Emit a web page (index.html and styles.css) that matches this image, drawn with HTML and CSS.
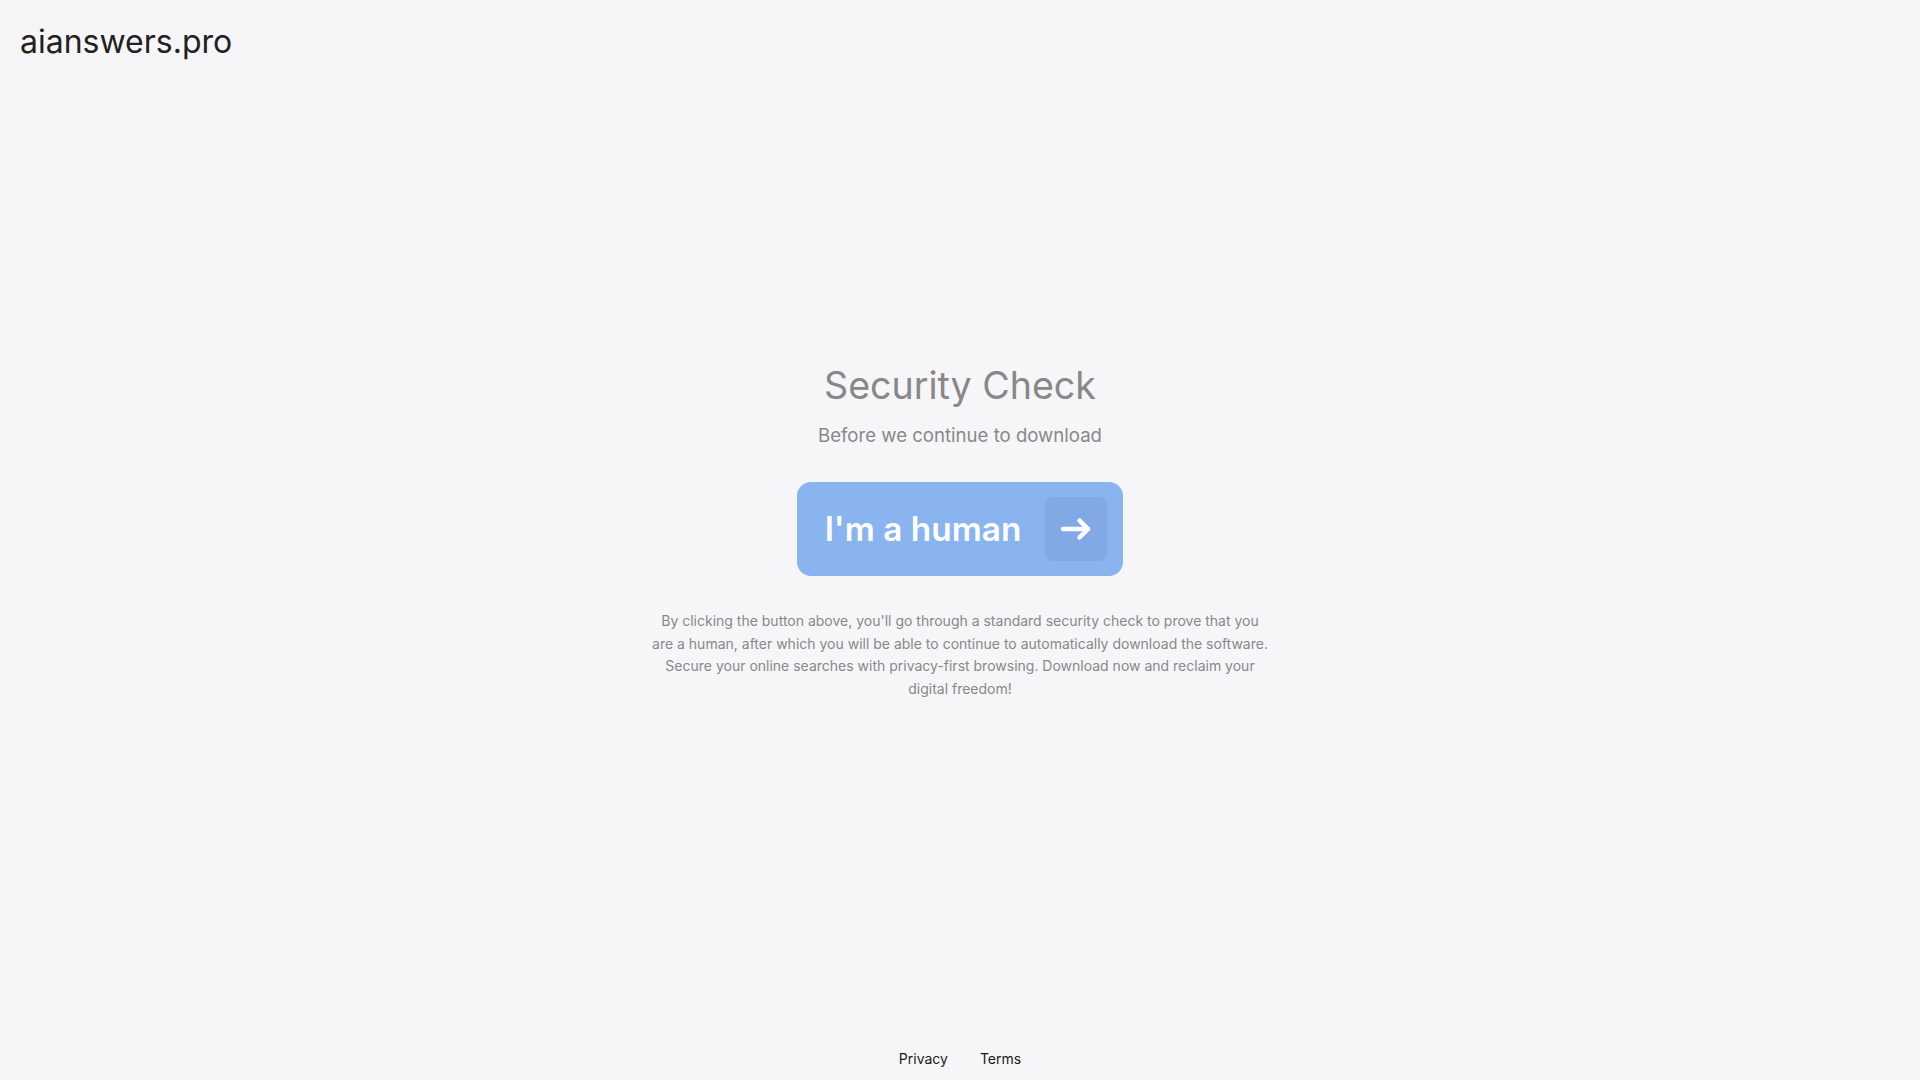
FILE: index.html
```html
<!DOCTYPE html>
<html lang="en">
<head>
<meta charset="utf-8">
<title>Security Check</title>
<link rel="stylesheet" href="styles.css">
</head>
<body>
<div class="page">
  <header class="header">
    <div class="logo">aianswers.pro</div>
  </header>
  <main class="main">
    <h1 class="title">Security Check</h1>
    <p class="subtitle">Before we continue to download</p>
    <button class="human-btn" type="button">
      <span class="btn-label">I'm a human</span>
      <span class="btn-icon">
        <svg width="32" height="24" viewBox="0 0 32 24" fill="none" stroke="#ffffff" stroke-width="4.5" stroke-linecap="round" stroke-linejoin="round"><path d="M3 12h25"/><path d="M19.5 3.5L28 12l-8.5 8.5"/></svg>
      </span>
    </button>
    <p class="note">By clicking the button above, you'll go through a standard security check to prove that you are a human, after which you will be able to continue to automatically download the software. Secure your online searches with privacy-first browsing. Download now and reclaim your digital freedom!</p>
  </main>
  <footer class="footer">
    <a class="footer-link" href="#">Privacy</a>
    <a class="footer-link" href="#">Terms</a>
  </footer>
</div>
</body>
</html>
```
FILE: styles.css
```css
* { box-sizing: border-box; }
html, body { margin: 0; padding: 0; }
body {
  background: #f6f6f8;
  font-family: Inter, "Noto Sans", sans-serif;
  color: #222;
}
.page {
  min-height: 100vh;
  display: flex;
  flex-direction: column;
}
.header {
  padding: 20px 20px;
}
.logo {
  font-size: 32px;
  line-height: 44px;
  color: #222;
}
.main {
  flex: 1;
  display: flex;
  flex-direction: column;
  align-items: center;
  justify-content: center;
  text-align: center;
  padding-bottom: 59px;
}
.title {
  margin: 0;
  font-size: 37.6px;
  font-weight: 400;
  line-height: 46px;
  color: #888;
}
.subtitle {
  margin: 13px 0 0;
  font-size: 18.6px;
  line-height: 26px;
  color: #888;
}
.human-btn {
  margin-top: 34px;
  display: flex;
  align-items: center;
  gap: 24px;
  padding: 15px 16px 15px 28px;
  border: none;
  border-radius: 14px;
  background: #8ab4f0;
  font-family: Inter, sans-serif;
  cursor: pointer;
}
.btn-label {
  font-size: 33.4px;
  font-weight: 600;
  color: #fff;
  line-height: 40px;
}
.btn-icon {
  width: 62px;
  height: 64px;
  border-radius: 8px;
  background: #80a9e5;
  display: flex;
  align-items: center;
  justify-content: center;
}
.note {
  margin: 34px 0 0;
  max-width: 616px;
  font-size: 14px;
  line-height: 22.5px;
  color: #888;
}
.footer {
  display: flex;
  justify-content: center;
  gap: 32px;
  padding: 10px 0 10px;
}
.footer-link {
  font-size: 14px;
  line-height: 22px;
  color: #1a1a1a;
  text-decoration: none;
}
```
